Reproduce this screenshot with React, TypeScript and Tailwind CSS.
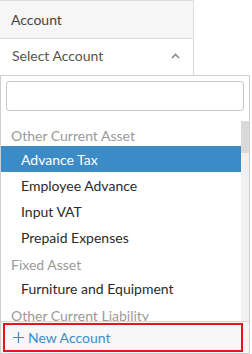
import { useState } from 'react';

const groups = [
  {
    label: 'Other Current Asset',
    items: ['Advance Tax', 'Employee Advance', 'Input VAT', 'Prepaid Expenses']
  },
  { label: 'Fixed Asset', items: ['Furniture and Equipment'] },
  { label: 'Other Current Liability', items: [] as string[] }
];

function ChevronUp() {
  return (
    <svg width="9" height="6" viewBox="0 0 9 6" className="text-[#8a8a8a]">
      <path d="M1 5 L4.5 1.5 L8 5" fill="none" stroke="currentColor" strokeWidth="1.6" />
    </svg>
  );
}

function Plus() {
  return (
    <svg width="11" height="11" viewBox="0 0 11 11" className="text-[#3e8ccb]">
      <path d="M5.5 0 V11 M0 5.5 H11" fill="none" stroke="currentColor" strokeWidth="1.2" />
    </svg>
  );
}

export default function App() {
  const [selected] = useState('Advance Tax');

  return (
    <div className="w-[252px] h-[354px] overflow-hidden bg-white font-['Lato','Liberation_Sans',sans-serif] text-[14px]">
      <div className="w-[194px] h-[39px] flex items-center pl-[11px] bg-[#f6f6f6] border-t border-r border-b border-[#dcdcdc] text-[#444]">
        Account
      </div>
      <div className="w-[194px] h-[36px] flex items-center justify-between pl-[12px] pr-[13px] pb-[3px] border-r border-[#dcdcdc] text-[#555]">
        <span>Select Account</span>
        <ChevronUp />
      </div>

      <div className="w-[250px] h-[279px] flex flex-col border border-[#cfcfcf] bg-white">
        <div className="px-[5px] pt-[5px]">
          <input className="w-full h-[30px] border border-[#c8c8c8] rounded-[3px] outline-none px-2" />
        </div>
        <div className="flex flex-1 min-h-0 mt-[10px]">
          <div className="flex-1 overflow-hidden">
            {groups.map((g) => (
              <div key={g.label}>
                <div className="h-[25px] flex items-center pt-[3px] pl-[10px] text-[#9a9a9a]">{g.label}</div>
                {g.items.map((item) => (
                  <div
                    key={item}
                    className={
                      item === selected
                        ? 'h-[26px] flex items-center pl-[20px] bg-[#3b8bc6] text-white'
                        : 'h-[26px] flex items-center pl-[20px] text-[#2b2b2b]'
                    }
                  >
                    {item}
                  </div>
                ))}
              </div>
            ))}
          </div>
          <div className="w-[8px] bg-[#f1f1f1]">
            <div className="h-[32px] bg-[#d9d9d9]" />
          </div>
        </div>
        <div className="h-[32px] border-t border-[#d6d6d6] bg-[#f7f7f7] px-[2px] pt-[1px] pr-[6px]">
          <div className="h-[29px] flex items-center gap-[4px] pl-[8px] border-2 border-[#e8141c] text-[#3e8ccb]">
            <Plus />
            <span>New Account</span>
          </div>
        </div>
      </div>
    </div>
  );
}
